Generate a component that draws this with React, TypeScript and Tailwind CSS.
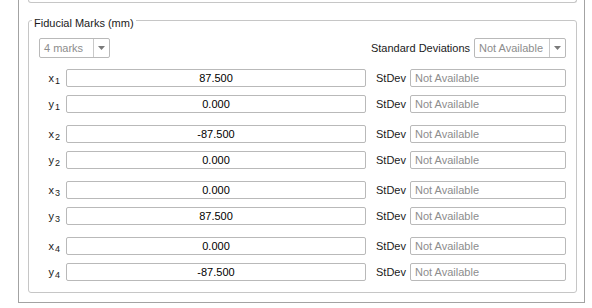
import React from "react";

const marks = [
  { i: "1", x: "87.500", y: "0.000" },
  { i: "2", x: "-87.500", y: "0.000" },
  { i: "3", x: "0.000", y: "87.500" },
  { i: "4", x: "0.000", y: "-87.500" },
];

const Combo = ({ text, width }: { text: string; width: string }) => {
  return (
    <div className={`${width} h-[20px] flex border border-[#b9b9b9] rounded-[2px] bg-white`}>
      <div className="flex-1 flex items-center pl-[4px] text-[#8d8d8d]">{text}</div>
      <div className="w-[16px] border-l border-[#c9c9c9] flex items-center justify-center">
        <svg width="7" height="4" viewBox="0 0 7 4">
          <polygon points="0,0 7,0 3.5,4" fill="#7a7a7a" />
        </svg>
      </div>
    </div>
  );
};

const Row = ({ axis, sub, value }: { axis: string; sub: string; value: string }) => {
  return (
    <div className="flex h-[18px] items-center">
      <div className="w-[27px] pr-[6px] text-right text-[#1a1a1a] leading-[13px]">
        {axis}
        <span className="relative top-[2px] ml-[1px] text-[9px] leading-none">{sub}</span>
      </div>
      <div className="w-[300px] h-[18px] border border-[#b9b9b9] rounded-[2px] bg-white flex items-center justify-center text-black">
        {value}
      </div>
      <div className="w-[44px] pl-[10px] text-[#1a1a1a]">StDev</div>
      <div className="w-[156px] h-[18px] border border-[#b9b9b9] rounded-[2px] bg-white flex items-center pl-[4px] text-[#8d8d8d]">
        Not Available
      </div>
    </div>
  );
};

export default function App() {
  return (
    <div className="w-[592px] h-[308px] bg-white overflow-hidden font-['Liberation_Sans',Arial,sans-serif] text-[11px] leading-[13px]">
      <div className="ml-[18px] w-[567px] h-[303px] border-x border-b border-[#a3a3a3] pl-[9px] pr-[7px]">
        <div className="h-[3px] border-x border-b border-[#c6c6c6] rounded-b-[3px]" />
        <div className="relative mt-[17px] border border-[#c6c6c6] rounded-[3px] px-[10px] pt-[17px] pb-[11px]">
          <span className="absolute left-[3px] top-[-4px] px-[2px] bg-white text-[#1a1a1a]">
            Fiducial Marks (mm)
          </span>
          <div className="flex items-center justify-between">
            <Combo text="4 marks" width="w-[71px]" />
            <div className="flex items-center">
              <span className="mr-[4px] text-[#1a1a1a]">Standard Deviations</span>
              <Combo text="Not Available" width="w-[92px]" />
            </div>
          </div>
          <div className="mt-[11px] flex flex-col gap-[12px]">
            {marks.map((m) => (
              <div key={m.i} className="flex flex-col gap-[8px]">
                <Row axis="x" sub={m.i} value={m.x} />
                <Row axis="y" sub={m.i} value={m.y} />
              </div>
            ))}
          </div>
        </div>
      </div>
    </div>
  );
}
